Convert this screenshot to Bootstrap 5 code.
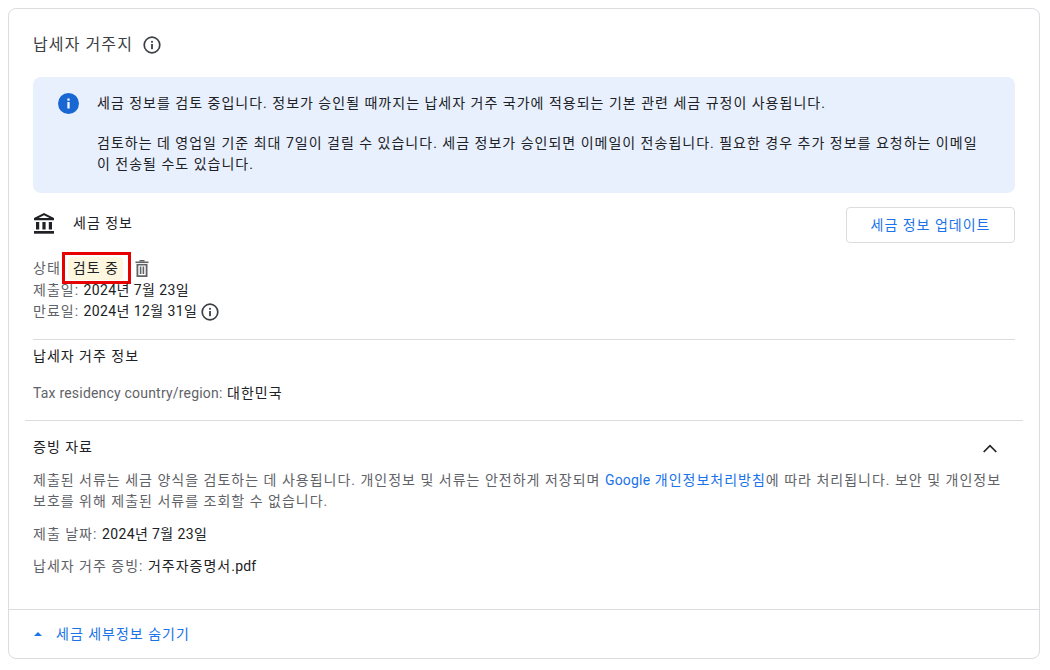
<!DOCTYPE html>
<html lang="ko">
<head>
    <meta charset="UTF-8">
    <meta name="viewport" content="width=device-width, initial-scale=1.0">
    <title>납세자 거주지</title>
    <link href="https://cdn.jsdelivr.net/npm/bootstrap@5.3.0/dist/css/bootstrap.min.css" rel="stylesheet">
    <style>
        body { font-family: Roboto, "Noto Sans CJK KR", sans-serif; font-size: 14px; line-height: 21px; letter-spacing: 1px; color: #202124; background: #fff; }
        .tax-card { margin: 8px 10px 0 8px; height: 651px; border: 1px solid #dadce0; border-radius: 8px; }
        .tax-body { height: 411px; padding: 0 24px; }
        .tax-title { height: 68px; padding-top: 3px; font-size: 16px; letter-spacing: 1.1px; color: #3c4043; }
        .tax-title svg { margin-left: 2px; }
        .tax-alert { height: 116px; padding: 16px 30px 0 25px; background: #e8f0fe; border-radius: 8px; }
        .tax-alert p { margin: 0 0 19px; }
        .tax-alert-text { margin-left: 18px; }
        .tax-info { height: 59px; padding-top: 14px; }
        .tax-bank { padding-top: 6px; }
        .tax-bank-label { margin-left: 2px; }
        .tax-btn { width: 169px; height: 36px; font-size: 14px; line-height: 34px; letter-spacing: 1px; padding: 0; color: #1a73e8; border: 1px solid #dadce0; border-radius: 4px; background: #fff; }
        .tax-muted { color: #5f6368; }
        .tax-latin { letter-spacing: .2px; }
        .tax-date { letter-spacing: .4px; }
        .status-row { height: 32px; margin-bottom: -4px; }
        .status-mark { border: 3px solid #e60000; padding: 2px 5px 1px 3px; margin-left: 1px; margin-right: 2px; height: 32px; }
        .status-chip { display: block; height: 23px; line-height: 22px; padding: 0 4px 0 5px; background: #fef7e0; border-radius: 4px; white-space: nowrap; }
        .tax-rule { margin-top: 17px; padding-top: 6px; border-top: 1px solid #dadce0; }
        .tax-residency { margin-top: 16px; }
        .tax-proof { height: 189px; margin: 0 16px; padding: 16px 8px 0; border-top: 1px solid #dadce0; }
        .tax-proof-head { margin-bottom: 12px; }
        .tax-proof p { margin: 0 0 11px; }
        .tax-proof p.tax-note { margin-bottom: 12px; }
        .tax-proof a { color: #1a73e8; text-decoration: none; }
        .tax-foot { height: 50px; padding: 14px 24px 0 25px; border-top: 1px solid #dadce0; color: #1a73e8; }
        .tax-foot svg { margin: 8px 14px 0 0; }
    </style>
</head>
<body class="m-0">
    <div class="tax-card">
        <div class="tax-body">
            <div class="tax-title d-flex align-items-center gap-2">
                <span>납세자 거주지</span>
                <svg width="18" height="18" viewBox="0 0 18 18" fill="none"><circle cx="9" cy="9" r="7.8" stroke="#3c4043" stroke-width="1.7"/><rect x="8.1" y="8" width="1.8" height="5.2" fill="#3c4043"/><rect x="8.1" y="4.900" width="1.8" height="1.8" fill="#3c4043"/></svg>
            </div>
            <div class="tax-alert d-flex">
                <svg class="flex-shrink-0" width="21" height="21" viewBox="0 0 21 21"><circle cx="10.5" cy="10.5" r="10.5" fill="#1967d2"/><rect x="9.4" y="9" width="2.2" height="6.5" fill="#fff"/><rect x="9.4" y="5.5" width="2.2" height="2.2" fill="#fff"/></svg>
                <div class="tax-alert-text">
                    <p>세금 정보를 검토 중입니다. 정보가 승인될 때까지는 납세자 거주 국가에 적용되는 기본 관련 세금 규정이 사용됩니다.</p>
                    <p class="mb-0">검토하는 데 영업일 기준 최대 7일이 걸릴 수 있습니다. 세금 정보가 승인되면 이메일이 전송됩니다. 필요한 경우 추가 정보를 요청하는 이메일이 전송될 수도 있습니다.</p>
                </div>
            </div>
            <div class="tax-info d-flex justify-content-between align-items-start">
                <div class="tax-bank d-flex gap-3 align-items-center">
                    <svg width="22" height="21" viewBox="0 0 22 21" fill="#202124"><path d="M11 0 1 5v2.300h20V5zM11 2.200 16.500 5h-11z"/><rect x="3" y="9" width="3.200" height="7.500"/><rect x="9.400" y="9" width="3.200" height="7.500"/><rect x="15.800" y="9" width="3.200" height="7.500"/><rect x="1" y="18" width="20" height="2.700"/></svg>
                    <span class="tax-bank-label">세금 정보</span>
                </div>
                <button class="btn tax-btn" type="button">세금 정보 업데이트</button>
            </div>
            <div class="status-row d-flex align-items-center">
                <span class="tax-muted">상태</span>
                <span class="status-mark"><span class="status-chip">검토 중</span></span>
                <svg width="18" height="18" viewBox="0 0 18 18" fill="#5f6368"><path d="M3.500 5h11v13h-11zM5.300 6.500V16.300h7.400V6.500z"/><rect x="6.500" y="1" width="5" height="1.500"/><rect x="2.500" y="2.500" width="13" height="1.600"/><rect x="6.800" y="7.500" width="1.600" height="7.500"/><rect x="9.600" y="7.500" width="1.600" height="7.500"/></svg>
            </div>
            <div><span class="tax-muted">제출일:</span> <span class="tax-date">2024년 7월 23일</span></div>
            <div class="d-flex align-items-center gap-1"><span><span class="tax-muted">만료일:</span> <span class="tax-date">2024년 12월 31일</span></span>
                <svg width="18" height="18" viewBox="0 0 18 18" fill="none"><circle cx="9" cy="9" r="7.8" stroke="#3c4043" stroke-width="1.7"/><rect x="8.1" y="8" width="1.8" height="5.2" fill="#3c4043"/><rect x="8.1" y="4.900" width="1.8" height="1.8" fill="#3c4043"/></svg>
            </div>
            <div class="tax-rule">납세자 거주 정보</div>
            <div class="tax-residency"><span class="tax-muted tax-latin">Tax residency country/region:</span> 대한민국</div>
        </div>
        <div class="tax-proof">
            <div class="tax-proof-head d-flex justify-content-between align-items-center">
                <span>증빙 자료</span>
                <svg class="me-3" width="18" height="18" viewBox="0 0 18 18" fill="none"><path d="M2.700 13 9 6.700l6.300 6.300" stroke="#202124" stroke-width="1.700"/></svg>
            </div>
            <p class="tax-muted tax-note">제출된 서류는 세금 양식을 검토하는 데 사용됩니다. 개인정보 및 서류는 안전하게 저장되며 <a href="#"><span class="tax-latin">Google</span> 개인정보처리방침</a>에 따라 처리됩니다. 보안 및 개인정보 보호를 위해 제출된 서류를 조회할 수 없습니다.</p>
            <p><span class="tax-muted">제출 날짜:</span> <span class="tax-date">2024년 7월 23일</span></p>
            <p><span class="tax-muted">납세자 거주 증빙:</span> 거주자증명서<span class="tax-latin">.pdf</span></p>
        </div>
        <div class="tax-foot d-flex align-items-start">
            <svg width="8" height="4" viewBox="0 0 8 4" fill="#1a73e8"><path d="M0 4 4 0l4 4z"/></svg>
            <span>세금 세부정보 숨기기</span>
        </div>
    </div>
    <script src="https://cdn.jsdelivr.net/npm/bootstrap@5.3.0/dist/js/bootstrap.bundle.min.js"></script>
</body>
</html>
